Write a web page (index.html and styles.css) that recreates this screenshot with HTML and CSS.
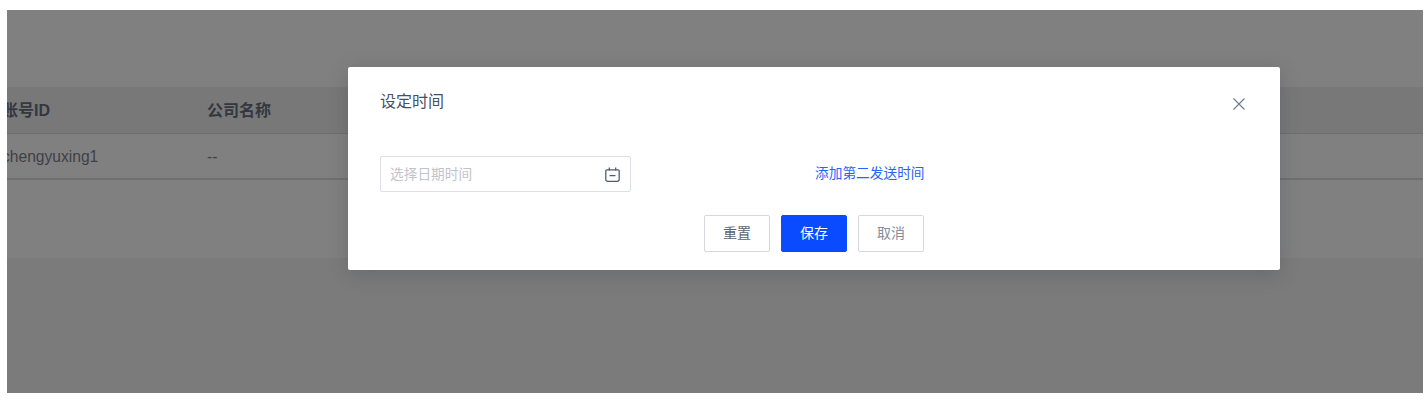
FILE: index.html
```html
<!DOCTYPE html>
<html lang="zh-CN">
<head>
<meta charset="utf-8">
<title>设定时间</title>
<link rel="stylesheet" href="styles.css">
</head>
<body>
<div class="stage">
  <div class="panel">
    <div class="table">
      <div class="row head"><div class="cell first"><span class="head-text">账号ID</span></div><div class="cell"><span class="head-text">公司名称</span></div></div>
      <div class="row body-row"><div class="cell first"><span class="row-text">chengyuxing1</span></div><div class="cell"><span class="row-text">--</span></div></div>
    </div>
  </div>
  <div class="modal">
    <div class="modal-head">
      <div class="modal-title">设定时间</div>
      <svg class="close" viewBox="0 0 14 14" width="14" height="14"><path d="M1.500 1.500 12.500 12.500M12.500 1.500 1.500 12.500" fill="none" stroke="#737b8f" stroke-width="1.200"/></svg>
    </div>
    <div class="modal-body">
      <div class="input">
        <span class="placeholder">选择日期时间</span>
        <svg class="cal" viewBox="0 0 16 16" width="17" height="17"><path d="M2.600 3.600h10.800a.9.9 0 0 1 .9.9v8.100a1.800 1.800 0 0 1-1.800 1.800H3.500a1.800 1.800 0 0 1-1.800-1.800V4.500a.9.9 0 0 1 .9-.9ZM5 1.400v3M11 1.400v3M5.200 9h5.600" fill="none" stroke="#4f5a70" stroke-width="1.200"/></svg>
      </div>
      <a class="add-link">添加第二发送时间</a>
    </div>
    <div class="modal-foot">
      <button class="btn reset">重置</button>
      <button class="btn primary">保存</button>
      <button class="btn cancel">取消</button>
    </div>
  </div>
</div>
</body>
</html>
```
FILE: styles.css
```css
html, body { margin: 0; padding: 0; background: #fff; }
body {
  width: 1428px;
  height: 404px;
  overflow: hidden;
  box-sizing: border-box;
  padding: 10px 5px 11px 7px;
  font-family: "Liberation Sans", "Noto Sans CJK SC", sans-serif;
}
.stage {
  position: relative;
  width: 1416px;
  height: 383px;
  overflow: hidden;
  background: #7b7b7b;
}
.panel {
  height: 248px;
  background: #808080;
  padding-top: 77px;
  box-sizing: border-box;
}
.table { margin-left: -5px; }
.row { display: flex; align-items: center; box-sizing: border-box; }
.head {
  height: 47px;
  background: #787878;
  border-bottom: 1px solid #6e6e6e;
  font-weight: 700;
  font-size: 16px;
  color: #333740;
  padding-bottom: 2px;
}
.body-row {
  height: 46px;
  border-bottom: 2px solid #6f6f6f;
  font-size: 15.600px;
  color: #3f4146;
  padding-top: 2px;
}
.cell { width: 205px; flex: none; }
.modal {
  position: absolute;
  left: 341px;
  top: 57px;
  width: 932px;
  height: 203px;
  box-sizing: border-box;
  padding: 0 32px;
  background: #fff;
  border-radius: 2px;
  box-shadow: 0 4px 20px rgba(40, 44, 60, 0.22);
}
.modal-head {
  display: flex;
  justify-content: space-between;
  align-items: flex-start;
  height: 89px;
}
.modal-title {
  margin-top: 24px;
  font-size: 16px;
  line-height: 22px;
  color: #465066;
}
.close { margin-top: 30px; margin-right: 2px; }
.modal-body { display: flex; align-items: center; height: 36px; }
.input {
  width: 251px;
  height: 36px;
  box-sizing: border-box;
  border: 1px solid #dcdfe6;
  border-radius: 2px;
  padding: 0 9px;
  display: flex;
  align-items: center;
  justify-content: space-between;
}
.placeholder { font-size: 13.700px; color: #bfc3cc; margin-top: -2px; }
.add-link { margin-left: 184px; font-size: 13.700px; color: #2a62f5; margin-top: -4px; }
.modal-foot {
  display: flex;
  justify-content: center;
  gap: 11px;
  margin-top: 23px;
}
.btn {
  width: 66px;
  height: 37px;
  box-sizing: border-box;
  border: 1px solid #d5d8df;
  border-radius: 2px;
  background: #fff;
  padding: 0 0 3px;
  font-family: inherit;
  font-size: 14px;
}
.reset { color: #5c6475; }
.cancel { color: #868c9a; }
.primary { background: #0a4bff; border-color: #0a4bff; color: #fff; }
```
